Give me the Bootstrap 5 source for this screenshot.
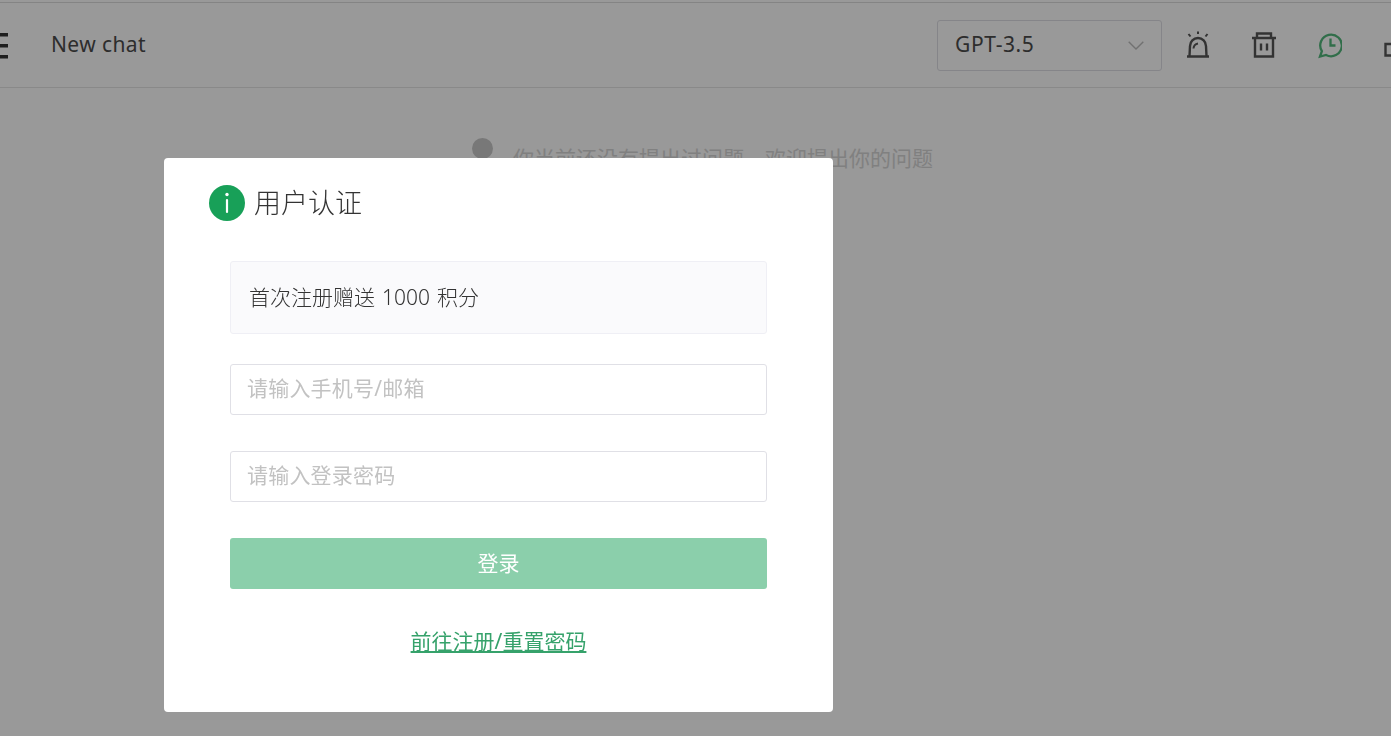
<!doctype html>
<html lang="zh-CN">
<head>
  <meta charset="utf-8" />
  <meta name="viewport" content="width=device-width, initial-scale=1" />
  <title>New chat</title>
  <link href="https://cdn.jsdelivr.net/npm/bootstrap@5.3.6/dist/css/bootstrap.min.css" rel="stylesheet" />
  <style>
    body {
      font-family: "Noto Sans", "Noto Sans CJK SC", sans-serif;
      font-size: 21px;
      color: #4c4c4c;
      background: #fff;
      height: 736px;
      overflow: hidden;
    }
    .top-strip {
      height: 86px;
      margin-top: 2px;
      padding-top: 17px;
      border-top: 1px solid #dcdcdc;
      border-bottom: 1px solid #e4e4e4;
      overflow: hidden;
    }
    .menu-icon { width: 24px; height: 28px; margin: 12px 0 0 -16px; flex: none; }
    .chat-name { margin-left: 43px; line-height: 49px; letter-spacing: .4px; }
    .model-pick {
      width: 225px;
      height: 51px;
      padding: 0 17px 1px 17px;
      border: 1px solid #dedee4;
      border-radius: 3px;
      margin-right: 24px;
      flex: none;
      letter-spacing: .6px;
    }
    .tool-row { gap: 42px; margin: 11px -17px 0 0; flex: none; }
    .tool-row svg { width: 24px; height: 28px; flex: none; }
    .empty-note { padding-left: 472px; margin-top: 51px; font-size: 21px; color: #d6d6d6; }
    .empty-dot { width: 21px; height: 21px; border-radius: 50%; background: #c8c8c8; flex: none; margin-right: 20px; margin-top: -1px; }
    .empty-text { margin-top: 4px; }
    .modal-backdrop.show { opacity: .4; }
    .auth-dialog { width: 669px; max-width: 669px; margin: 158px 0 0 164px; }
    .auth-box {
      height: 554px;
      padding: 27px 66px 0;
      border: 0;
      border-radius: 4px;
      color: #333;
      font-family: "Noto Sans", "Noto Sans CJK SC", sans-serif;
    }
    .auth-head { height: 36px; margin-left: -21px; margin-bottom: 40px; gap: 9px; font-size: 27px; line-height: 36px; font-weight: 300; }
    .auth-head svg { width: 36px; height: 36px; flex: none; }
    .bonus-box {
      height: 73px;
      padding: 0 18px;
      margin-bottom: 30px;
      background: #fafafc;
      border: 1px solid #efeff5;
      border-radius: 3px;
      font-size: 21px;
      font-weight: 300;
      word-spacing: 1.500px;
    }
    .auth-input.form-control {
      height: 51px;
      padding: 0 16px 3px;
      margin-bottom: 36px;
      border: 1px solid #e0e0e6;
      border-radius: 3px;
      font-size: 21px;
      letter-spacing: .2px;
      color: #333;
    }
    .auth-input::placeholder { color: #c2c2c2; opacity: 1; }
    .auth-btn.btn, .auth-btn.btn:disabled {
      height: 51px;
      width: 100%;
      margin-bottom: 37px;
      background: #8bcfab;
      border: 0;
      border-radius: 3px;
      color: #fff;
      font-size: 21px;
      opacity: 1;
    }
    .auth-link { line-height: 30px; font-size: 21px; color: #36a26b; }
  </style>
</head>
<body>
  <div class="top-strip d-flex align-items-start">
    <svg class="menu-icon" viewBox="0 0 24 28" fill="#333"><rect x="0" y="1" width="24" height="3.5"/><rect x="0" y="12" width="24" height="3.5"/><rect x="0" y="23" width="24" height="3.5"/></svg>
    <div class="chat-name">New chat</div>
    <div class="model-pick ms-auto d-flex align-items-center justify-content-between">
      <span>GPT-3.5</span>
      <svg width="16" height="9" viewBox="0 0 16 9" fill="none" stroke="#bdbdbd" stroke-width="1.4"><path d="M.7.7 8 8 15.3.7"/></svg>
    </div>
    <div class="tool-row d-flex align-items-start">
      <svg viewBox="0 0 24 28" fill="none" stroke="#555" stroke-width="2.4"><path d="M1 25.500h22M3.500 25 4 15a8 8 0 0 1 16 0l.5 10"/><path d="M7.500 17.500a5.500 5.500 0 0 1 4.500-5" stroke-width="2"/><path d="M12 .5v2.500M2.500 3 4.500 5.500M21.500 3 19.500 5.500" stroke-width="2"/></svg>
      <svg viewBox="0 0 24 28" fill="none" stroke="#555" stroke-width="2.400"><path d="M0 7h24M5 7V2.500h14V7M3 7v18.500h18V7M9 12.500v7M15 12.500v7"/></svg>
      <svg viewBox="0 0 24 28" fill="none" stroke="#52b87c" stroke-width="2.300"><path d="M2 25.500l1.900-5.300A10.800 10.800 0 1 1 8 24z"/><path d="M12.500 7.500v7h5"/></svg>
      <svg viewBox="0 0 24 28" fill="none" stroke="#555" stroke-width="2.400"><path d="M7 13H1.500v11.500h21V13M12 18V3M9 6l3-3 3 3"/></svg>
    </div>
  </div>
  <div class="empty-note d-flex align-items-start">
    <div class="empty-dot"></div>
    <div class="empty-text">你当前还没有提出过问题，欢迎提出你的问题</div>
  </div>

  <div class="modal-backdrop show"></div>
  <div class="modal d-block">
    <div class="modal-dialog auth-dialog">
      <div class="modal-content auth-box">
        <div class="auth-head d-flex align-items-center">
          <svg viewBox="0 0 36 36"><circle cx="18" cy="18" r="18" fill="#18a058"/><circle cx="18" cy="9.500" r="1.700" fill="#fff"/><rect x="16.900" y="14" width="2.200" height="14" rx="1.100" fill="#fff"/></svg>
          <span>用户认证</span>
        </div>
        <div class="bonus-box d-flex align-items-center">首次注册赠送 1000 积分</div>
        <input class="form-control auth-input" type="text" placeholder="请输入手机号/邮箱" />
        <input class="form-control auth-input" type="password" placeholder="请输入登录密码" />
        <button class="btn auth-btn" type="button" disabled>登录</button>
        <div class="text-center"><a class="auth-link" href="#">前往注册/重置密码</a></div>
      </div>
    </div>
  </div>

  <script src="https://cdn.jsdelivr.net/npm/bootstrap@5.3.6/dist/js/bootstrap.bundle.min.js"></script>
</body>
</html>
